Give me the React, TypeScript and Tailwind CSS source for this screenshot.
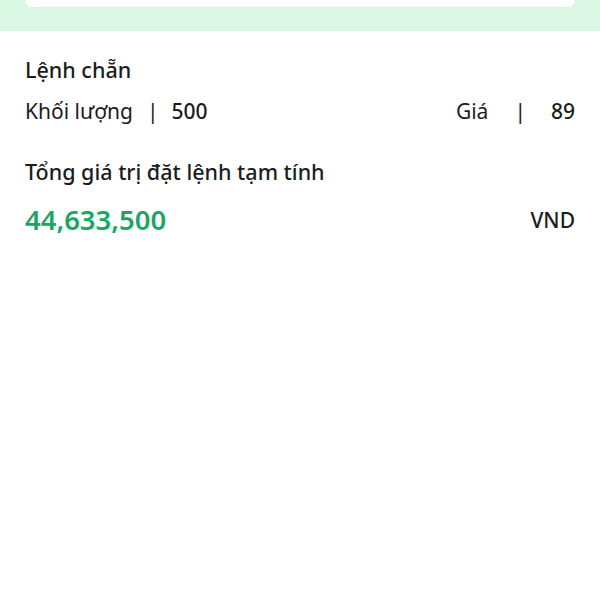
export default function App() {
  return (
    <div className="min-h-[600px] w-[600px] bg-white font-['Noto_Sans',sans-serif] text-[#1c1c1c]">
      {/* top band with the card above it */}
      <div className="h-[31px] bg-[#d9f7e2] px-[25px]">
        <div className="h-[7px] rounded-b-[12px] bg-white" />
      </div>

      <div className="px-[25px] pt-[25px]">
        <h3 className="text-[21.5px] font-medium leading-[28px]">Lệnh chẵn</h3>

        <div className="mt-[13px] flex items-center justify-between text-[21px] leading-[28px]">
          <div className="flex items-center">
            <span>Khối lượng</span>
            <span className="ml-[14px] mr-[13px] text-[#1c1c1c]">|</span>
            <span className="font-medium">500</span>
          </div>
          <div className="flex items-center">
            <span>Giá</span>
            <span className="ml-[26px] mr-[25px] text-[#1c1c1c]">|</span>
            <span className="font-medium">89</span>
          </div>
        </div>

        <h3 className="mt-[33px] text-[21.5px] font-medium leading-[28px]">Tổng giá trị đặt lệnh tạm tính</h3>

        <div className="mt-[17px] flex items-center justify-between">
          <span className="text-[27.5px] font-semibold leading-[34px] text-[#1ea564]">44,633,500</span>
          <span className="text-[21px] font-medium leading-[28px]">VND</span>
        </div>
      </div>
    </div>
  );
}
